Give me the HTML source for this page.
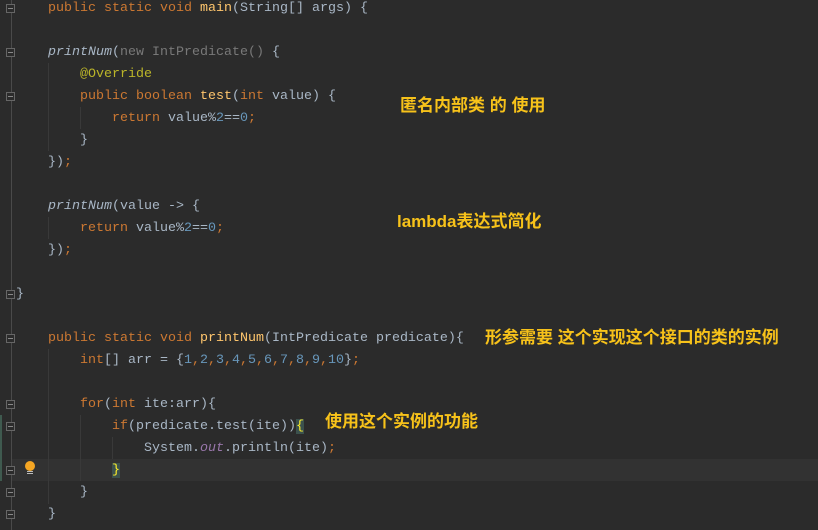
<!DOCTYPE html>
<html><head><meta charset="utf-8"><style>
html,body{margin:0;padding:0;background:#2b2b2b;width:818px;height:530px;overflow:hidden;position:relative}
.gut{position:absolute;left:11px;top:0;width:1px;height:530px;background:#4a4a4a}
.cur{position:absolute;left:12px;top:459px;width:806px;height:22px;background:#323232}
.mod{position:absolute;left:0;top:415px;width:2px;height:66px;background:#3f5a4f}
.w{position:absolute;left:0;top:4px;width:818px;height:530px}
.l{position:absolute;height:22px;line-height:22px;font:13.33px "Liberation Mono",monospace;color:#a9b7c6;white-space:pre}
.k{color:#cc7832}.m{color:#ffc66d}.n{color:#6897bb}.a{color:#bbb529}.g{color:#787878}.i{font-style:italic}.o{color:#9876aa;font-style:italic}
.br{background:#3b514d;color:#ffef28}
.c{position:absolute;font:bold 17px "Liberation Sans","Noto Sans CJK SC",sans-serif;color:#f7c21a;white-space:pre;line-height:20px}
.guide{position:absolute;width:1px;background:#393939}
.f{position:absolute;left:6px;width:9px;height:9px;border:1px solid #666;box-sizing:border-box;background:#2b2b2b}
.f:after{content:"";position:absolute;left:1px;top:3px;width:5px;height:1px;background:#888}
</style></head><body>
<div class="gut"></div>
<div class="cur"></div>
<div class="mod"></div>
<div class="guide" style="left:48px;top:63px;height:88px"></div>
<div class="guide" style="left:80px;top:107px;height:22px"></div>
<div class="guide" style="left:48px;top:217px;height:22px"></div>
<div class="guide" style="left:48px;top:349px;height:155px"></div>
<div class="guide" style="left:80px;top:415px;height:66px"></div>
<div class="guide" style="left:112px;top:437px;height:22px"></div>
<div class="f" style="top:4px"></div>
<div class="f" style="top:48px"></div>
<div class="f" style="top:92px"></div>
<div class="f" style="top:290px"></div>
<div class="f" style="top:334px"></div>
<div class="f" style="top:400px"></div>
<div class="f" style="top:422px"></div>
<div class="f" style="top:466px"></div>
<div class="f" style="top:488px"></div>
<div class="f" style="top:510px"></div>
<div style="position:absolute;left:25px;top:461px;width:10px;height:10px;border-radius:50%;background:#f5a623"></div>
<div style="position:absolute;left:27px;top:471px;width:6px;height:1px;background:#bbb"></div>
<div style="position:absolute;left:27px;top:473px;width:6px;height:1px;background:#bbb"></div>

<div class="w">
<div class="l" style="left:48px;top:-3px"><span class="k">public static void </span><span class="m">main</span>(String[] args) {</div>
<div class="l" style="left:48px;top:41px"><span class="i">printNum</span>(<span class="g">new IntPredicate() </span>{</div>
<div class="l" style="left:80px;top:63px"><span class="a">@Override</span></div>
<div class="l" style="left:80px;top:85px"><span class="k">public boolean </span><span class="m">test</span>(<span class="k">int </span>value) {</div>
<div class="l" style="left:112px;top:107px"><span class="k">return </span>value%<span class="n">2</span>==<span class="n">0</span><span class="k">;</span></div>
<div class="l" style="left:80px;top:129px">}</div>
<div class="l" style="left:48px;top:151px">})<span class="k">;</span></div>
<div class="l" style="left:48px;top:195px"><span class="i">printNum</span>(value -&gt; {</div>
<div class="l" style="left:80px;top:217px"><span class="k">return </span>value%<span class="n">2</span>==<span class="n">0</span><span class="k">;</span></div>
<div class="l" style="left:48px;top:239px">})<span class="k">;</span></div>
<div class="l" style="left:16px;top:283px">}</div>
<div class="l" style="left:48px;top:327px"><span class="k">public static void </span><span class="m">printNum</span>(IntPredicate predicate){</div>
<div class="l" style="left:80px;top:349px"><span class="k">int</span>[] arr = {<span class="n">1</span><span class="k">,</span><span class="n">2</span><span class="k">,</span><span class="n">3</span><span class="k">,</span><span class="n">4</span><span class="k">,</span><span class="n">5</span><span class="k">,</span><span class="n">6</span><span class="k">,</span><span class="n">7</span><span class="k">,</span><span class="n">8</span><span class="k">,</span><span class="n">9</span><span class="k">,</span><span class="n">10</span>}<span class="k">;</span></div>
<div class="l" style="left:80px;top:393px"><span class="k">for</span>(<span class="k">int </span>ite:arr){</div>
<div class="l" style="left:112px;top:415px"><span class="k">if</span>(predicate.test(ite))<span class="br">{</span></div>
<div class="l" style="left:144px;top:437px">System.<span class="o">out</span>.println(ite)<span class="k">;</span></div>
<div class="l" style="left:112px;top:459px"><span class="br">}</span></div>
<div class="l" style="left:80px;top:481px">}</div>
<div class="l" style="left:48px;top:503px">}</div>
</div>

<div class="c" style="left:400px;top:96px">匿名内部类 的 使用</div>
<div class="c" style="left:397px;top:212px">lambda表达式简化</div>
<div class="c" style="left:485px;top:328px">形参需要 这个实现这个接口的类的实例</div>
<div class="c" style="left:325px;top:412px">使用这个实例的功能</div>
</body></html>
